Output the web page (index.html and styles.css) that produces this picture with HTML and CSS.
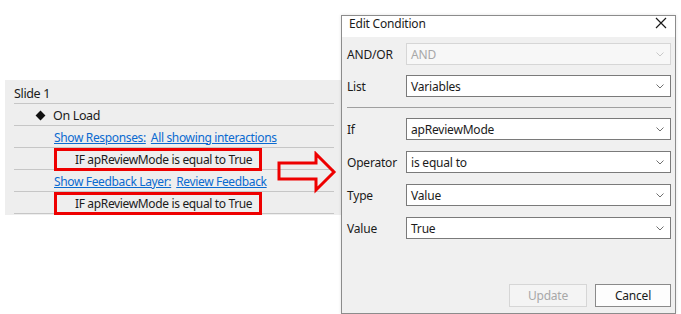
FILE: index.html
```html
<!DOCTYPE html>
<html>
<head>
<meta charset="utf-8">
<link rel="stylesheet" href="styles.css">
</head>
<body>
<div class="scene">
  <div class="tree">
    <div class="row row-slide">Slide 1</div>
    <div class="row row-event"><span class="diamond"></span>On Load</div>
    <div class="row row-link"><a class="link">Show Responses:</a><a class="link">All showing interactions</a></div>
    <div class="row row-cond"><div class="cond-box">IF apReviewMode is equal to True</div></div>
    <div class="row row-link"><a class="link">Show Feedback Layer:</a><a class="link">Review Feedback</a></div>
    <div class="row row-cond"><div class="cond-box">IF apReviewMode is equal to True</div></div>
  </div>

  <svg class="arrow" width="62" height="44" viewBox="0 0 62 44">
    <polygon points="2,12 39,12 39,3 57,21 39,39 39,28 2,28" fill="none" stroke="#ee0000" stroke-width="3" stroke-linejoin="miter"/>
  </svg>

  <div class="dialog">
    <div class="titlebar">
      <span class="title">Edit Condition</span>
      <svg class="close" width="12" height="12" viewBox="0 0 12 12"><path d="M1 1 L11 11 M11 1 L1 11" stroke="#1a1a1a" stroke-width="1.2"/></svg>
    </div>
    <div class="dbody">
      <div class="field">
        <span class="label">AND/OR</span>
        <div class="combo disabled"><span>AND</span><svg class="chev" width="8" height="5" viewBox="0 0 8 5"><path d="M0.5 0.5 L4 4 L7.5 0.5" fill="none" stroke="#c8c8c8" stroke-width="1"/></svg></div>
      </div>
      <div class="field">
        <span class="label">List</span>
        <div class="combo"><span>Variables</span><svg class="chev" width="8" height="5" viewBox="0 0 8 5"><path d="M0.5 0.5 L4 4 L7.5 0.5" fill="none" stroke="#707070" stroke-width="1"/></svg></div>
      </div>
      <div class="sep"></div>
      <div class="group">
        <div class="field">
          <span class="label">If</span>
          <div class="combo"><span>apReviewMode</span><svg class="chev" width="8" height="5" viewBox="0 0 8 5"><path d="M0.5 0.5 L4 4 L7.5 0.5" fill="none" stroke="#707070" stroke-width="1"/></svg></div>
        </div>
        <div class="field">
          <span class="label">Operator</span>
          <div class="combo"><span>is equal to</span><svg class="chev" width="8" height="5" viewBox="0 0 8 5"><path d="M0.5 0.5 L4 4 L7.5 0.5" fill="none" stroke="#707070" stroke-width="1"/></svg></div>
        </div>
        <div class="field">
          <span class="label">Type</span>
          <div class="combo"><span>Value</span><svg class="chev" width="8" height="5" viewBox="0 0 8 5"><path d="M0.5 0.5 L4 4 L7.5 0.5" fill="none" stroke="#707070" stroke-width="1"/></svg></div>
        </div>
        <div class="field">
          <span class="label">Value</span>
          <div class="combo"><span>True</span><svg class="chev" width="8" height="5" viewBox="0 0 8 5"><path d="M0.5 0.5 L4 4 L7.5 0.5" fill="none" stroke="#707070" stroke-width="1"/></svg></div>
        </div>
      </div>
      <div class="spacer"></div>
      <div class="buttons">
        <div class="btn btn-disabled">Update</div>
        <div class="btn">Cancel</div>
      </div>
    </div>
  </div>
</div>
</body>
</html>
```

FILE: styles.css
```css
* { box-sizing: border-box; }
html, body { margin: 0; padding: 0; background: #ffffff; }
body {
  font-family: "Noto Sans", "Open Sans", sans-serif;
  font-size: 12px;
  color: #1b1b1b;
  width: 681px;
  height: 314px;
  overflow: hidden;
}
.scene {
  position: relative;
  display: flex;
  align-items: flex-start;
  padding-left: 5px;
}
.tree {
  margin-top: 80px;
  width: 336px;
  background: #eeeeee;
  padding: 0 7px 1px 9px;
}
.row {
  height: 22px;
  border-bottom: 1px solid #c6c6c6;
  display: flex;
  align-items: center;
  white-space: nowrap;
  letter-spacing: -0.35px;
  padding-top: 1px;
}
.row-slide { height: 24px; padding-top: 4px; font-size: 12.5px; }
.row-event { padding-left: 23px; font-size: 12.5px; }
.diamond {
  width: 7px; height: 7px; background: #111;
  transform: rotate(45deg);
  margin-right: 9px;
}
.row-link { padding-left: 40px; }
.link {
  color: #0a6ad0;
  text-decoration: underline;
  margin-right: 5px;
}
.row-cond { padding-left: 40px; padding-top: 0; align-items: flex-start; position: relative; }
.cond-box {
  width: 208px;
  height: 23px;
  border: 3px solid #ee0000;
  padding-left: 18px;
  display: flex;
  align-items: center;
  position: relative;
  z-index: 1;
}
.arrow {
  position: absolute;
  left: 277px;
  top: 151px;
}
.dialog {
  margin-top: 15px;
  width: 335px;
  height: 299px;
  border: 1px solid #8c8c8c;
  background: #f0f0f0;
  display: flex;
  flex-direction: column;
  box-shadow: 0 0 3px rgba(0,0,0,0.12);
}
.titlebar {
  height: 21px;
  background: #ffffff;
  display: flex;
  align-items: flex-start;
  justify-content: space-between;
  padding: 0 8px 0 7px;
}
.title { font-size: 12px; letter-spacing: -0.2px; margin-top: -1px; }
.close { margin-top: 1px; }
.dbody {
  flex: 1;
  padding: 6px 4px 6px 5px;
  display: flex;
  flex-direction: column;
}
.field {
  display: flex;
  align-items: center;
  height: 22px;
  margin-bottom: 10px;
}
.group .field { margin-bottom: 11px; }
.label { width: 59px; letter-spacing: -0.2px; }
.combo {
  flex: 1;
  height: 22px;
  border: 1px solid #7a7a7a;
  background: #ffffff;
  display: flex;
  align-items: center;
  justify-content: space-between;
  padding: 0 6px 0 4px;
  letter-spacing: -0.2px;
}
.combo.disabled {
  border-color: #d6d6d6;
  background: #f7f7f7;
  color: #a8a8a8;
}
.sep {
  height: 1px;
  background: #a0a0a0;
  margin: 0 0 10px 0;
}
.spacer { flex: 1; }
.buttons {
  display: flex;
  justify-content: flex-end;
  gap: 8px;
}
.btn {
  width: 76px;
  height: 23px;
  border: 1px solid #8a8a8a;
  background: #fdfdfd;
  display: flex;
  align-items: center;
  justify-content: center;
  letter-spacing: -0.2px;
}
.btn-disabled {
  width: 78px;
  border-color: #d6d6d6;
  background: #f4f4f4;
  color: #a8a8a8;
}
```
